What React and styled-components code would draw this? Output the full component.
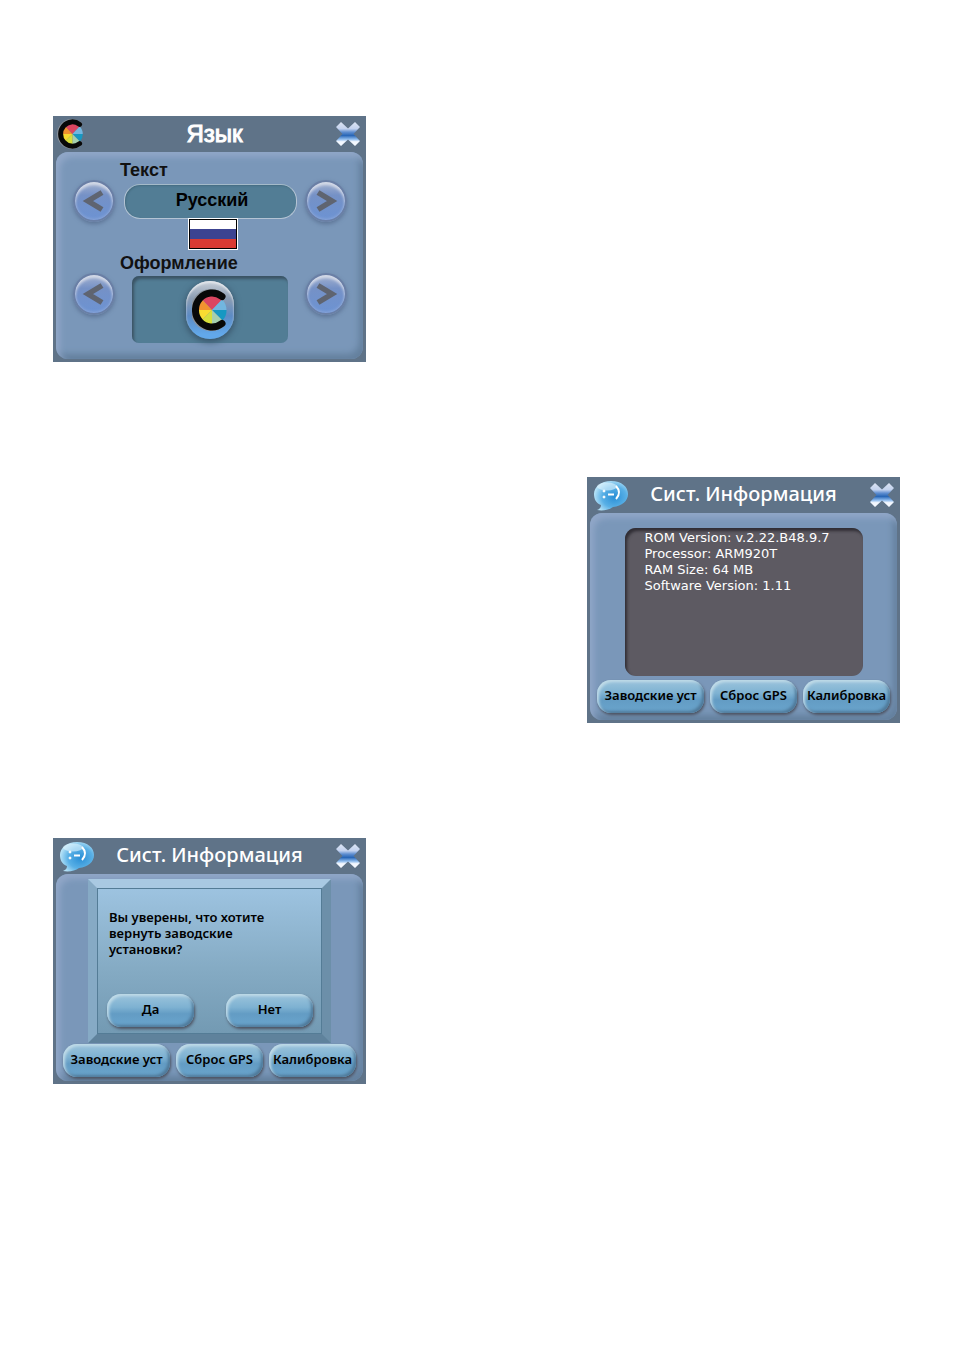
import React, { useId } from "react";
import styled, { createGlobalStyle } from "styled-components";

const GlobalStyle = createGlobalStyle`
  * {
    box-sizing: border-box;
  }
  body {
    margin: 0;
    background: #fff;
  }
`;

const Page = styled.main`
  display: flex;
  flex-direction: column;
  align-items: flex-start;
  gap: 115px;
  min-height: 100vh;
  padding: 116px 53px;
`;

const Screen = styled.section`
  display: flex;
  flex-direction: column;
  width: 313px;
  max-width: 100%;
  padding: 0 3px 3px;
  align-self: ${(p) => (p.$right ? "flex-end" : "flex-start")};
  background: #5f7388;
  font-family: "Noto Sans", sans-serif;
`;

const Header = styled.header`
  display: grid;
  grid-template-columns: 36px 1fr 36px;
  align-items: center;
  height: 36px;
`;

const Title = styled.h2`
  margin: 0;
  padding: ${(p) => (p.$arial ? "0 0 0 10px" : "0 0 3px")};
  font-family: ${(p) => (p.$arial ? '"Liberation Sans", sans-serif' : '"Noto Sans", sans-serif')};
  font-size: ${(p) => (p.$arial ? "24px" : "20px")};
  font-weight: ${(p) => (p.$arial ? 400 : 500)};
  line-height: 32px;
  text-align: center;
  white-space: nowrap;
  color: #fff;
  -webkit-text-stroke: ${(p) => (p.$arial ? "1px #fff" : "0")};
`;

const CloseButton = styled.button`
  display: flex;
  justify-self: end;
  margin: 0;
  padding: 0 2px 0 0;
  border: 0;
  background: none;
  cursor: pointer;
`;

const Panel = styled.div`
  display: flex;
  flex-direction: column;
  align-items: center;
  height: 207px;
  padding: ${(p) => p.$pad || "0"};
  border-radius: 12px;
  background: #7a97b9;
  box-shadow: inset 4px 5px 6px #91a7c8, inset -4px -5px 6px #64809e;
`;

const Label = styled.label`
  align-self: flex-start;
  margin-left: 64px;
  font-family: "Liberation Sans", sans-serif;
  font-size: 18px;
  font-weight: bold;
  line-height: 20px;
  color: #111;
`;

const PickerRow = styled.div`
  display: flex;
  justify-content: space-between;
  align-items: ${(p) => (p.$top ? "flex-start" : "center")};
  width: 100%;
  padding: 0 16px 0 17px;
`;

const RoundButton = styled.button`
  display: flex;
  align-items: center;
  justify-content: center;
  width: 42px;
  height: 42px;
  padding: 0;
  border: 2px solid #6a7fa5;
  border-radius: 50%;
  background: linear-gradient(#a3b1cf 0, #7591c6 35%, #6c93d3 100%);
  box-shadow: inset 0 3px 3px #d5dbe8, inset 0 -1px 3px #8ba6d8, 0 2px 4px #5d7496;
  cursor: pointer;
`;

const Value = styled.output`
  width: 173px;
  height: 35px;
  padding-left: 4px;
  border: 1px solid #b4c4d4;
  border-top-color: #a4bac9;
  border-radius: 16px;
  background: #527d95;
  box-shadow: inset 1px 1px 2px #456b81;
  font-family: "Liberation Sans", sans-serif;
  font-size: 18px;
  font-weight: bold;
  line-height: 30px;
  text-align: center;
  color: #000;
`;

const FlagRow = styled.div`
  display: flex;
  justify-content: center;
  width: 100%;
  margin: -4px 0 3px;
  padding-left: 6px;
`;

const Flag = styled.div`
  width: 50px;
  height: 32px;
  border: 1px solid #fff;
  outline: 1px solid #000;
  outline-offset: -2px;
  background: linear-gradient(#fff 0 34%, #3c4391 34% 66%, #d93a32 66%);
`;

const Preview = styled.output`
  display: flex;
  align-items: center;
  justify-content: center;
  width: 156px;
  height: 67px;
  margin-top: 3px;
  border-radius: 7px;
  background: #527d95;
  box-shadow: inset 2px 3px 3px #3b5364;
`;

const Badge = styled.div`
  display: flex;
  align-items: center;
  justify-content: center;
  width: 48px;
  height: 58px;
  border-radius: 24px;
  background: linear-gradient(#c9d0d9, #8b9cb2 30%, #5d8bc4 60%, #62a8ea 92%);
  box-shadow: inset 0 2px 2px #e2e6eb, 0 2px 6px 1px #38546a;
`;

const InfoBox = styled.div`
  width: 238px;
  height: 148px;
  padding: 2px 20px;
  border-radius: 11px;
  background: #5d5a62;
  box-shadow: inset 2px 3px 3px #302e35;
  font-family: "DejaVu Sans", sans-serif;
  font-size: 13px;
  line-height: 16px;
  color: #fff;
`;

const InfoLine = styled.div`
  white-space: nowrap;
`;

const ButtonRow = styled.div`
  display: flex;
  gap: 6px;
  margin-top: ${(p) => p.$top || "0"};
`;

const PillButton = styled.button`
  width: ${(p) => (p.$wide ? "107px" : "87px")};
  height: 33px;
  padding: 0 0 4px;
  border: 0;
  border-radius: 14px;
  background: linear-gradient(#9cc4dc 0, #7eb2d2 40%, #639cc4 60%, #6aa5cd 100%);
  box-shadow: inset 2px 2px 3px #c0dbe8, inset -2px -2px 3px #4e7898, 1px 2px 3px #4c5261;
  font-family: "Noto Sans", sans-serif;
  font-size: 13px;
  font-weight: 600;
  white-space: nowrap;
  color: #000;
  cursor: pointer;
`;

const Dialog = styled.div`
  width: 243px;
  height: 164px;
  border: 9px solid;
  border-color: #a9c9e2 #6c8fa9 #5f829c #86aac5;
`;

const DialogBody = styled.div`
  display: flex;
  flex-direction: column;
  justify-content: space-between;
  height: 100%;
  padding: 20px 8px 6px 9px;
  border: 1px solid #547c96;
  background: linear-gradient(#9dc3e0, #85abc4 55%, #739ab3);
`;

const Question = styled.p`
  margin: 0;
  padding-left: 2px;
  font-size: 13px;
  font-weight: 600;
  line-height: 16px;
  color: #000;
`;

const DialogButtons = styled.div`
  display: flex;
  justify-content: space-between;
`;

function CloseIcon() {
  const id = useId();
  return (
    <svg width="26" height="26" viewBox="0 0 26 26" aria-hidden="true">
      <defs>
        <linearGradient id={id} x1="0" y1="1" x2="0" y2="25" gradientUnits="userSpaceOnUse">
          <stop offset="0" stopColor="#dce4f3" />
          <stop offset=".28" stopColor="#c3d2ee" />
          <stop offset=".42" stopColor="#5f8ed0" />
          <stop offset=".56" stopColor="#2866b6" />
          <stop offset=".72" stopColor="#8fbcee" />
          <stop offset=".82" stopColor="#f4f8ff" />
        </linearGradient>
      </defs>
      <path
        d="M6 1 L13 7.5 L20 1 L25 6 L18.5 13 L25 20 L20 25 L13 18.5 L6 25 L1 20 L7.5 13 L1 6Z"
        fill={`url(#${id})`}
      />
    </svg>
  );
}

function ArrowIcon({ right }) {
  return (
    <svg width="24" height="26" viewBox="0 0 24 26" aria-hidden="true">
      <path
        d={right ? "M4 4.5 L18 13 L4 21.5" : "M20 4.5 L6 13 L20 21.5"}
        fill="none"
        stroke="#5f6470"
        strokeWidth="5.5"
      />
    </svg>
  );
}

function WheelIcon({ width, height }) {
  return (
    <svg width={width} height={height} viewBox="0 0 36 42" aria-hidden="true">
      <path d="M29 7.5 A16.5 17 0 1 0 29 34.5" fill="none" stroke="#8b929b" strokeWidth="8" strokeLinecap="round" />
      <g transform="translate(20 21)">
        <path d="M0 0 L-10 -10.5 A14.5 14.5 0 0 1 10 -10.5Z" fill="#dc4560" />
        <path d="M0 0 L10 -10.5 A14.5 14.5 0 0 1 14.5 0Z" fill="#72b6df" />
        <path d="M0 0 L14.5 0 A14.5 14.5 0 0 1 10.5 10.5Z" fill="#1798c2" />
        <path d="M0 0 L10.5 10.5 A14.5 14.5 0 0 1 0 14.5Z" fill="#a5cfae" />
        <path d="M0 0 L0 14.5 A14.5 14.5 0 0 1 -10.5 10.5Z" fill="#d6df3b" />
        <path d="M0 0 L-10.5 10.5 A14.5 14.5 0 0 1 -14.5 0Z" fill="#f8db31" />
        <path d="M0 0 L-14.5 0 A14.5 14.5 0 0 1 -10 -10.5Z" fill="#f2922f" />
      </g>
      <path d="M30 7.5 A16.5 17 0 1 0 30 34.5" fill="none" stroke="#080808" strokeWidth="7" strokeLinecap="round" />
    </svg>
  );
}

function ChatIcon() {
  const id = useId();
  return (
    <svg width="38" height="32" viewBox="0 0 38 32" aria-hidden="true">
      <defs>
        <radialGradient id={id} cx=".6" cy=".55" r=".6">
          <stop offset="0" stopColor="#2a8fd6" />
          <stop offset=".6" stopColor="#59b0e6" />
          <stop offset="1" stopColor="#b5e2f7" />
        </radialGradient>
      </defs>
      <path
        d="M21 2 C32 2 38 8 38 15 C38 22 32 27 23 28 C19 31 13 32 7 31 C10 30 11 28 11 26 C6 24 4 20 4 15 C4 8 11 2 21 2Z"
        fill={`url(#${id})`}
      />
      <ellipse cx="17" cy="7.5" rx="10" ry="4" fill="#e4f6ff" opacity=".6" />
      <g fill="#fff" stroke="#fff">
        <circle cx="14" cy="12" r="1" />
        <circle cx="14" cy="18" r="1" />
        <path d="M18 15.5 H24" strokeWidth="2" />
        <path d="M26 7 Q32 13.5 26 20" fill="none" strokeWidth="2" />
      </g>
    </svg>
  );
}

function ScreenHeader({ icon, title, arial }) {
  return (
    <Header>
      {icon}
      <Title $arial={arial}>{title}</Title>
      <CloseButton type="button" aria-label="Закрыть">
        <CloseIcon />
      </CloseButton>
    </Header>
  );
}

function Picker({ top, children }) {
  return (
    <PickerRow $top={top}>
      <RoundButton type="button" aria-label="Назад">
        <ArrowIcon />
      </RoundButton>
      {children}
      <RoundButton type="button" aria-label="Вперёд">
        <ArrowIcon right />
      </RoundButton>
    </PickerRow>
  );
}

function SystemButtons({ top }) {
  return (
    <ButtonRow $top={top}>
      <PillButton type="button" $wide>Заводские уст</PillButton>
      <PillButton type="button">Сброс GPS</PillButton>
      <PillButton type="button">Калибровка</PillButton>
    </ButtonRow>
  );
}

const systemInfo = [
  "ROM Version: v.2.22.B48.9.7",
  "Processor: ARM920T",
  "RAM Size: 64 MB",
  "Software Version: 1.11",
];

export default function App() {
  return (
    <>
      <GlobalStyle />
      <Page>
        <Screen>
          <ScreenHeader icon={<WheelIcon width={30} height={30} />} title="Язык" arial />
          <Panel $pad="8px 0 0">
            <Label htmlFor="language">Текст</Label>
            <Picker>
              <Value id="language">Русский</Value>
            </Picker>
            <FlagRow>
              <Flag role="img" aria-label="Россия" />
            </FlagRow>
            <Label htmlFor="theme">Оформление</Label>
            <Picker top>
              <Preview id="theme">
                <Badge>
                  <WheelIcon width={36} height={42} />
                </Badge>
              </Preview>
            </Picker>
          </Panel>
        </Screen>

        <Screen $right>
          <ScreenHeader icon={<ChatIcon />} title="Сист. Информация" />
          <Panel $pad="15px 0 0">
            <InfoBox>
              {systemInfo.map((line) => (
                <InfoLine key={line}>{line}</InfoLine>
              ))}
            </InfoBox>
            <SystemButtons top="4px" />
          </Panel>
        </Screen>

        <Screen>
          <ScreenHeader icon={<ChatIcon />} title="Сист. Информация" />
          <Panel $pad="5px 0 0">
            <Dialog role="dialog" aria-label="Сист. Информация">
              <DialogBody>
                <Question>
                  Вы уверены, что хотите
                  <br />
                  вернуть заводские
                  <br />
                  установки?
                </Question>
                <DialogButtons>
                  <PillButton type="button">Да</PillButton>
                  <PillButton type="button">Нет</PillButton>
                </DialogButtons>
              </DialogBody>
            </Dialog>
            <SystemButtons top="1px" />
          </Panel>
        </Screen>
      </Page>
    </>
  );
}
